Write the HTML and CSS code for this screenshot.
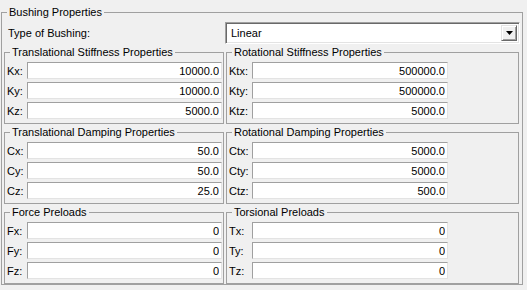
FILE: index.html
```html
<!DOCTYPE html>
<html lang="en">
<head>
    <meta charset="UTF-8">
    <title>Bushing Properties</title>
    <link rel="stylesheet" href="styles.css">
</head>
<body>
    <fieldset class="group outer">
        <legend>Bushing Properties</legend>

        <div class="type-row">
            <span class="type-label">Type of Bushing:</span>
            <div class="combo">
                <span class="combo-value">Linear</span>
                <span class="combo-btn">
                    <svg width="7" height="4" viewBox="0 0 7 4"><path d="M0 0h7L3.5 4z" fill="#000"/></svg>
                </span>
            </div>
        </div>

        <div class="groups">
            <fieldset class="group left">
                <legend>Translational Stiffness Properties</legend>
                <div class="row"><label>Kx:</label><input type="text" value="10000.0"></div>
                <div class="row"><label>Ky:</label><input type="text" value="10000.0"></div>
                <div class="row"><label>Kz:</label><input type="text" value="5000.0"></div>
            </fieldset>
            <fieldset class="group right">
                <legend>Rotational Stiffness Properties</legend>
                <div class="row"><label>Ktx:</label><input type="text" value="500000.0"></div>
                <div class="row"><label>Kty:</label><input type="text" value="500000.0"></div>
                <div class="row"><label>Ktz:</label><input type="text" value="5000.0"></div>
            </fieldset>

            <fieldset class="group left">
                <legend>Translational Damping Properties</legend>
                <div class="row"><label>Cx:</label><input type="text" value="50.0"></div>
                <div class="row"><label>Cy:</label><input type="text" value="50.0"></div>
                <div class="row"><label>Cz:</label><input type="text" value="25.0"></div>
            </fieldset>
            <fieldset class="group right">
                <legend>Rotational Damping Properties</legend>
                <div class="row"><label>Ctx:</label><input type="text" value="5000.0"></div>
                <div class="row"><label>Cty:</label><input type="text" value="5000.0"></div>
                <div class="row"><label>Ctz:</label><input type="text" value="500.0"></div>
            </fieldset>

            <fieldset class="group left">
                <legend>Force Preloads</legend>
                <div class="row"><label>Fx:</label><input type="text" value="0"></div>
                <div class="row"><label>Fy:</label><input type="text" value="0"></div>
                <div class="row"><label>Fz:</label><input type="text" value="0"></div>
            </fieldset>
            <fieldset class="group right">
                <legend>Torsional Preloads</legend>
                <div class="row"><label>Tx:</label><input type="text" value="0"></div>
                <div class="row"><label>Ty:</label><input type="text" value="0"></div>
                <div class="row"><label>Tz:</label><input type="text" value="0"></div>
            </fieldset>
        </div>
    </fieldset>
</body>
</html>
```

FILE: styles.css
```css
body {
    font-family: "Liberation Sans", Arial, sans-serif;
    font-size: 11px;
    color: #000000;
    background: #f0f0f0;
    margin: 0;
    padding: 6px 4px 0 1px;
}

.group {
    margin: 0;
    border: 1px solid #a0a0a0;
    min-width: 0;
}

.group legend {
    padding: 0 2px;
    margin-left: 3px;
    line-height: 13px;
    height: 13px;
}

.outer {
    padding: 0 3px 0 2px;
}

.type-row {
    display: flex;
    align-items: center;
    margin: 3px -1px 2px 0;
}

.type-label {
    flex: 1;
    padding-left: 4px;
}

.combo {
    width: 295px;
    height: 22px;
    box-sizing: border-box;
    display: flex;
    align-items: center;
    background: #ffffff;
    border-top: 1px solid #a0a0a0;
    border-left: 1px solid #a0a0a0;
    border-right: 1px solid #ffffff;
    border-bottom: 1px solid #ffffff;
    box-shadow: inset 1px 1px 0 #696969, inset -1px -1px 0 #e3e3e3;
    padding: 2px;
}

.combo-value {
    flex: 1;
    padding-left: 3px;
}

.combo-btn {
    width: 16px;
    height: 16px;
    box-sizing: border-box;
    display: flex;
    align-items: center;
    justify-content: center;
    background: #f0f0f0;
    border-top: 1px solid #e3e3e3;
    border-left: 1px solid #e3e3e3;
    border-right: 1px solid #696969;
    border-bottom: 1px solid #696969;
    box-shadow: inset 1px 1px 0 #ffffff, inset -1px -1px 0 #a0a0a0;
}

.groups {
    display: grid;
    grid-template-columns: 220px 293px;
    column-gap: 2px;
    row-gap: 2px;
}

.left,
.right {
    display: flex;
    flex-direction: column;
    gap: 3px;
    padding: 3px 1px 4px 2px;
}

.row {
    display: flex;
    align-items: center;
    height: 17px;
}

.row label {
    width: 20px;
    flex: none;
}

.right .row label {
    width: 23px;
}

.row input {
    width: 195px;
    height: 17px;
    box-sizing: border-box;
    margin: 0;
    padding: 0 2px 0 0;
    font: inherit;
    color: #000000;
    text-align: right;
    background: #ffffff;
    border-top: 1px solid #a0a0a0;
    border-left: 1px solid #a0a0a0;
    border-right: 1px solid #e3e3e3;
    border-bottom: 1px solid #e3e3e3;
    outline: none;
}

.right .row input {
    width: 196px;
}
```
